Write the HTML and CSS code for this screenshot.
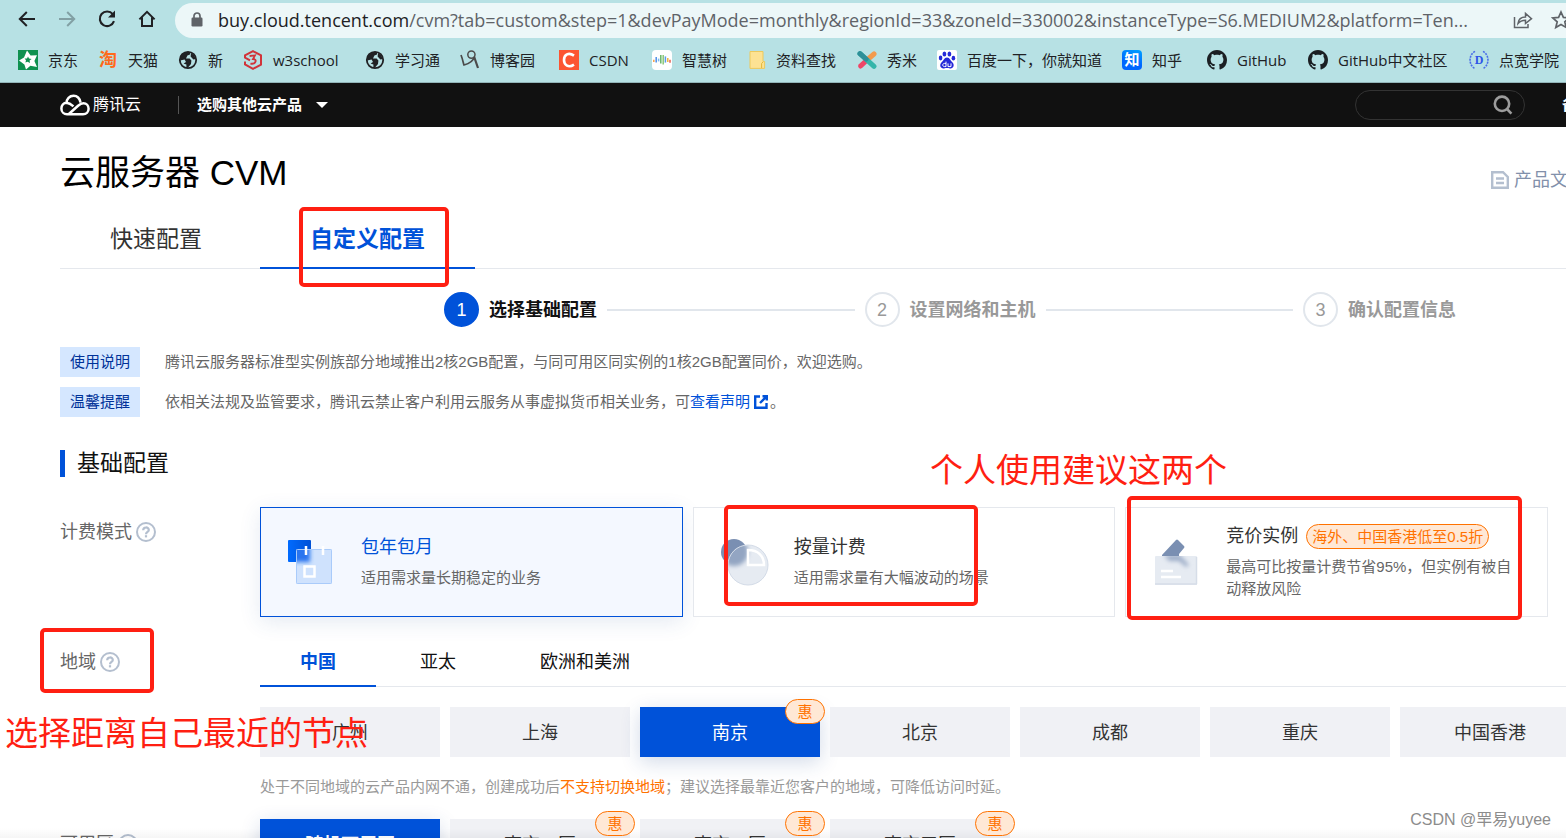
FILE: index.html
```
<!DOCTYPE html>
<html lang="zh-CN">
<head>
<meta charset="utf-8">
<title>云服务器 CVM</title>
<link rel="stylesheet" href="styles.css">
</head>
<body>
<svg class="defs" aria-hidden="true">
  <defs>
    <symbol id="globe" viewBox="0 0 20 20"><circle cx="10" cy="10" r="8.2" fill="none" stroke="#202124" stroke-width="1.8"/><path d="M3 5 L8 2 L12 2 L12 4.600 L9.400 5.600 L8 8.400 L11.600 8.400 L13.400 10.600 L13 14 L9.600 18 L8.400 17.600 L8.400 14.600 L5.600 13.400 L8 12 L6.600 9.600 L2 10.600 Z M13 3 L16 5 L18 9 L15.400 9.400 L12.600 6.400 Z" fill="#202124"/></symbol>
    <symbol id="octocat" viewBox="0 0 16 16"><path fill="#1b1f23" d="M8 0C3.58 0 0 3.58 0 8c0 3.54 2.29 6.53 5.47 7.59.4.07.55-.17.55-.38 0-.19-.01-.82-.01-1.49-2.01.37-2.53-.49-2.69-.94-.09-.23-.48-.94-.82-1.13-.28-.15-.68-.52-.01-.53.63-.01 1.08.58 1.23.82.72 1.21 1.87.87 2.33.66.07-.52.28-.87.51-1.07-1.78-.2-3.64-.89-3.64-3.95 0-.87.31-1.59.82-2.15-.08-.2-.36-1.02.08-2.12 0 0 .67-.21 2.2.82.64-.18 1.32-.27 2-.27s1.36.09 2 .27c1.53-1.04 2.2-.82 2.2-.82.44 1.1.16 1.92.08 2.12.51.56.82 1.27.82 2.15 0 3.07-1.87 3.75-3.65 3.95.29.25.54.73.54 1.48 0 1.07-.01 1.93-.01 2.2 0 .21.15.46.55.38A8.01 8.01 0 0 0 16 8c0-4.42-3.58-8-8-8z"/></symbol>
    <symbol id="help" viewBox="0 0 20 20"><circle cx="10" cy="10" r="9" fill="none" stroke="#b4bfcf" stroke-width="2"/><path d="M7.2 8.2 C7.2 4.6 12.8 4.6 12.8 8 C12.8 10 10 9.8 10 12.2" fill="none" stroke="#b4bfcf" stroke-width="2.2"/><rect x="8.900" y="13.200" width="2.200" height="2.200" fill="#b4bfcf"/></symbol>
  </defs>
</svg>

<header class="browser">
  <div class="toolbar">
    <button class="nav" type="button" aria-label="后退"><svg width="20" height="20" viewBox="0 0 20 20" fill="none" stroke="#202124" stroke-width="2"><path d="M18 10H3M9.8 3 L2.8 10 L9.8 17"/></svg></button>
    <button class="nav" type="button" aria-label="前进"><svg width="20" height="20" viewBox="0 0 20 20" fill="none" stroke="#82a0a4" stroke-width="2"><path d="M2 10H17M10.2 3 L17.2 10 L10.2 17"/></svg></button>
    <button class="nav" type="button" aria-label="刷新"><svg width="20" height="20" viewBox="0 0 20 20"><path d="M15.8 5.2 A7.3 7.3 0 1 0 17 12.2" fill="none" stroke="#202124" stroke-width="2.1"/><path d="M18 1.6V8.6H11Z" fill="#202124"/></svg></button>
    <button class="nav" type="button" aria-label="主页"><svg width="20" height="20" viewBox="0 0 20 20" fill="none" stroke="#202124" stroke-width="2"><path d="M2.4 10.4 L10 2.8 L17.6 10.4 M5 8.6V17H15V8.6"/></svg></button>
    <div class="address">
      <svg class="lock" width="12" height="16" viewBox="0 0 12 16"><rect x="0.5" y="5.5" width="11" height="9" rx="1.2" fill="#5f6368"/><path d="M3 6V4a3 3 0 0 1 6 0V6" fill="none" stroke="#5f6368" stroke-width="1.7"/></svg>
      <p class="url">buy.cloud.tencent.com<span class="path">/cvm?tab=custom&amp;step=1&amp;devPayMode=monthly&amp;regionId=33&amp;zoneId=330002&amp;instanceType=S6.MEDIUM2&amp;platform=Ten...</span></p>
      <button class="addr-btn" type="button" aria-label="分享"><svg width="20" height="20" viewBox="0 0 20 20" fill="none" stroke="#5f6368" stroke-width="1.5"><path d="M1.5 7V17.5H15V14M5 13.5C5.5 9 8.5 7 12.5 7V3.5L18.5 8.7L12.5 13.5V10.2C9 10.2 7 11 5 13.5Z"/></svg></button>
      <button class="addr-btn" type="button" aria-label="收藏"><svg width="20" height="20" viewBox="0 0 20 20" fill="none" stroke="#5f6368" stroke-width="1.7"><path d="M10 2 L12.4 7.4 L18.2 7.9 L13.8 11.8 L15.2 17.5 L10 14.4 L4.8 17.5 L6.2 11.8 L1.8 7.9 L7.6 7.4Z"/></svg></button>
    </div>
  </div>
  <nav class="bookmarks">
    <a href="#"><svg viewBox="0 0 20 20"><rect width="20" height="20" fill="#0f9150"/><path d="M9 .5 L12.6 5.4 L19 5.2 L16.4 11 L19 17 L12.4 15.8 L8 19.5 L6.4 14.4 L1 10.6 L6 7.4Z" fill="#fff"/><path d="M10 6.4 L11 8.6 L13.6 9 L11.6 10.6 L12 13 L9.6 11.8 L7.4 12.6 L8 10.2 L6.6 8.4 L9 8.4Z" fill="#0f9150"/></svg>京东</a>
    <a href="#"><span class="mark mark-tao">淘</span>天猫</a>
    <a href="#"><svg><use href="#globe"/></svg>新</a>
    <a href="#"><svg viewBox="0 0 20 20" fill="none" stroke="#d1343a" stroke-width="2"><path d="M2 8V5.4L10 1.2L18 5.4V14.6L10 18.8L2 14.4V11.4M1.6 7.4L7 10.4"/><path d="M6.6 6 L12 5.4 L10 9 C14.6 9 13 14.6 7.4 13.6" stroke-width="1.8"/></svg>w3school</a>
    <a href="#"><svg><use href="#globe"/></svg>学习通</a>
    <a href="#"><svg viewBox="0 0 20 20" fill="none" stroke="#4b4b4b"><circle cx="11.4" cy="4.6" r="3.6" stroke-width="1.5"/><path d="M1 5 C3 10 3.4 14 4 15 C8 14 13 12 14.4 6.6" stroke-width="1.7"/><path d="M14.2 7 L18 18" stroke-width="2.2"/></svg>博客园</a>
    <a href="#"><svg viewBox="0 0 20 20"><rect width="20" height="20" fill="#fc5531"/><path d="M15 5.6 C9.6 1.8 5 4.8 5 10 C5 15.2 9.6 18.2 15 14.6" fill="none" stroke="#fff" stroke-width="2.6"/></svg>CSDN</a>
    <a href="#"><svg viewBox="0 0 20 20"><rect width="20" height="20" rx="4" fill="#fff"/><g fill="none" stroke-width="1.5"><path d="M1.8 9.8V12" stroke="#f5a24b"/><path d="M4.2 7V12.6" stroke="#4f8ee8"/><path d="M6.6 8.6V11.4" stroke="#7cb8f0"/><path d="M8.8 5V13.4" stroke="#67b56a"/><path d="M11.2 5V14.6" stroke="#8cc873"/><path d="M13.4 6.4V12.6" stroke="#5b9be8"/><path d="M15.8 8V12" stroke="#f0b43c"/><path d="M18 9.8V12.8" stroke="#e45d50"/></g></svg>智慧树</a>
    <a href="#"><svg class="folder" viewBox="0 0 17 20"><path d="M1 1.5H14V11.5H15.6V18.4H1Z" fill="#fde293" stroke="#ecc95c"/><path d="M12.6 18V13.5L14 12" stroke="#e2b73c" fill="none"/></svg>资料查找</a>
    <a href="#"><svg viewBox="0 0 20 20" fill="none" stroke-linecap="round" stroke-width="5"><path d="M10 10L17 4" stroke="#f39a4c"/><path d="M10 10L3.6 16" stroke="#ee4667"/><path d="M3 3.6L17 16.4" stroke="#35b5aa"/><path d="M3 3.6L9 9" stroke="#2e8f98"/></svg>秀米</a>
    <a href="#"><svg viewBox="0 0 20 20"><rect width="20" height="20" rx="2" fill="#fff"/><g fill="#2529d8"><ellipse cx="7.4" cy="4" rx="1.9" ry="2.6"/><ellipse cx="12.4" cy="4" rx="1.9" ry="2.6"/><ellipse cx="3.6" cy="8" rx="1.8" ry="2.4"/><ellipse cx="16.4" cy="8.2" rx="1.8" ry="2.4"/><path d="M10 7.6C13 7.6 13.4 11 15.6 12.6C18 15.4 16 19 13 18.4C10.6 18 9.4 18 7 18.4C3.6 18.8 2 15.4 4.4 12.6C6.6 11 7 7.6 10 7.6Z"/></g><path d="M9 11.6V16.6H7.4C5.2 16.6 5.2 13.4 7.4 13.4H9M11 13.4V16.6H14V13.4" fill="none" stroke="#fff"/></svg>百度一下，你就知道</a>
    <a href="#"><span class="mark mark-zhi">知</span>知乎</a>
    <a href="#"><svg><use href="#octocat"/></svg>GitHub</a>
    <a href="#"><svg><use href="#octocat"/></svg>GitHub中文社区</a>
    <a href="#"><span class="mark mark-d"><svg viewBox="0 0 20 20" fill="none" stroke="#4b6fe8" stroke-width="1.6" stroke-dasharray="2 1"><path d="M6 1.4C-.6 5-.6 15 6 18.6M14 1.4C20.6 5 20.6 15 14 18.6"/></svg><b>D</b></span>点宽学院</a>
  </nav>
</header>

<div class="site">
  <header class="topbar">
    <a class="brand" href="#"><svg width="30" height="22" viewBox="0 0 30 22" fill="none" stroke="#fff" stroke-width="2.5"><path d="M20.5 8.4 C19.6 4 16.6 1.8 13.6 1.8 C9.4 1.8 6.6 5 6.6 8.8 C3.4 8.8 1.4 11.4 1.4 14.4 C1.4 18 4 20.3 7 20.3 H23 C26.4 20.3 28.6 17.8 28.6 14.8 C28.6 11.6 26.4 9.2 23.4 9.2 C20.8 9.2 19.6 10.4 17.8 12 L8.6 20.2 M6.4 9 C9.6 8.6 11 10.2 13.4 12.4"/></svg>腾讯云</a>
    <button class="products" type="button">选购其他云产品<svg width="12" height="6" viewBox="0 0 12 6"><path d="M0 0H12L6 6Z" fill="#fff"/></svg></button>
    <form class="search" role="search"><input type="search" aria-label="搜索"><svg width="20" height="20" viewBox="0 0 20 20" fill="none" stroke="#9c9c9c" stroke-width="2.6"><circle cx="9" cy="8.8" r="7.2"/><path d="M14 14L18.4 18.6"/></svg></form>
    <a class="record" href="#">备案</a>
  </header>

  <main class="page">
    <div class="title-row">
      <h1>云服务器 CVM</h1>
      <a class="docs" href="#"><svg width="18" height="18" viewBox="0 0 18 18" fill="none" stroke="#b4bfcf" stroke-width="2.4"><path d="M1.200 1.200H12L16.800 6V16.800H1.200ZM5 7.500H13M5 12H13"/></svg>产品文档</a>
    </div>
    <nav class="tabs">
      <a href="#">快速配置</a>
      <a class="on" href="#">自定义配置</a>
    </nav>
    <ol class="steps">
      <li class="on"><span class="num">1</span>选择基础配置</li>
      <li><span class="num">2</span>设置网络和主机</li>
      <li><span class="num">3</span>确认配置信息</li>
    </ol>
    <div class="notices">
      <p><span class="tag">使用说明</span>腾讯云服务器标准型实例族部分地域推出2核2GB配置，与同可用区同实例的1核2GB配置同价，欢迎选购。</p>
      <p><span class="tag">温馨提醒</span>依相关法规及监管要求，腾讯云禁止客户利用云服务从事虚拟货币相关业务，可<a href="#">查看声明<svg width="14" height="14" viewBox="0 0 14 14" fill="none" stroke="#0052d9" stroke-width="2.4"><path d="M6 1.5H1.200V12.800H12.500V8M8.500 1.200H12.800V5.500M13 1L6 8"/></svg></a>。</p>
    </div>
    <h2>基础配置</h2>

    <section class="row billing">
      <h3>计费模式<svg width="20" height="20"><use href="#help"/></svg></h3>
      <div class="cards">
        <button class="card on" type="button">
          <svg class="art" width="50" height="50" viewBox="0 0 50 50">
            <defs><linearGradient id="blue"><stop stop-color="#006bff"/><stop offset="1" stop-color="#0051d6"/></linearGradient><filter id="soft" x="-50%" y="-50%" width="200%" height="200%"><feGaussianBlur stdDeviation="2"/></filter><clipPath id="sheet"><rect x="10" y="12" width="36" height="35" rx="1"/></clipPath></defs>
            <rect x="2" y="3" width="23" height="22" rx="1" fill="url(#blue)"/>
            <rect x="10" y="12" width="36" height="35" rx="1" fill="#cfe2fd"/>
            <g clip-path="url(#sheet)"><rect x="0" y="1" width="24" height="24" fill="#2b74ef" filter="url(#soft)"/></g>
            <rect x="10.500" y="12.500" width="35" height="34" rx="1" fill="none" stroke="#a9cbfa"/>
            <path d="M20 9V18M37 9V18" stroke="#fff" stroke-width="2.500"/>
            <rect x="18.500" y="29.500" width="10" height="10" fill="none" stroke="#fff" stroke-width="2.500"/>
          </svg>
          <span class="info"><strong>包年包月</strong><span>适用需求量长期稳定的业务</span></span>
        </button>
        <button class="card" type="button">
          <svg class="art" width="50" height="50" viewBox="0 0 50 50">
            <defs><clipPath id="disc"><circle cx="29" cy="28" r="20"/></clipPath></defs>
            <circle cx="15" cy="15" r="13" fill="#7a8fb2"/>
            <circle cx="29" cy="28" r="20" fill="#e6ebf2"/>
            <g clip-path="url(#disc)"><circle cx="15" cy="15" r="14" fill="#93a5c2" filter="url(#soft)"/></g>
            <circle cx="29" cy="28" r="20" fill="none" stroke="#d3dbe7"/>
            <path d="M29 13V28H45C45 19 39 13 29 13Z" fill="none" stroke="#fff" stroke-width="2.500"/>
          </svg>
          <span class="info"><strong>按量计费</strong><span>适用需求量有大幅波动的场景</span></span>
        </button>
        <button class="card" type="button">
          <svg class="art" width="50" height="50" viewBox="0 0 50 50">
            <defs><clipPath id="paper"><rect x="4" y="19" width="42" height="29"/></clipPath></defs>
            <path d="M11 18L25 3Q26 2 27 3L33 9Q34 10 33 11L28 17V20H11Z" fill="#7a8fb2"/>
            <rect x="4" y="19" width="42" height="29" rx="1" fill="#e6ebf2"/>
            <g clip-path="url(#paper)"><path d="M13 18L29 18L38 28L35 30L28 24L18 24Z" fill="#9dadc8" filter="url(#soft)"/></g>
            <path d="M4 47H46M45.500 20V47" stroke="#d6dde8" stroke-width="1.500"/>
            <path d="M10 34H22M10 40H30" stroke="#fff" stroke-width="2.500"/>
          </svg>
          <span class="info"><strong>竞价实例<em class="promo">海外、中国香港低至0.5折</em></strong><span>最高可比按量计费节省95%，但实例有被自动释放风险</span></span>
        </button>
      </div>
    </section>

    <section class="row region">
      <h3>地域<svg width="20" height="20"><use href="#help"/></svg></h3>
      <div class="field">
        <nav class="subtabs"><a class="on" href="#">中国</a><a href="#">亚太</a><a href="#">欧洲和美洲</a></nav>
        <div class="options">
          <button type="button">广州</button>
          <button type="button">上海</button>
          <button class="on" type="button">南京<i class="badge">惠</i></button>
          <button type="button">北京</button>
          <button type="button">成都</button>
          <button type="button">重庆</button>
          <button type="button">中国香港</button>
        </div>
        <p class="hint">处于不同地域的云产品内网不通，创建成功后<b>不支持切换地域</b>；建议选择最靠近您客户的地域，可降低访问时延。</p>
      </div>
    </section>

    <section class="row zone">
      <h3>可用区<svg width="20" height="20"><use href="#help"/></svg></h3>
      <div class="options">
        <button class="on strong" type="button">随机可用区</button>
        <button type="button">南京一区<i class="badge">惠</i></button>
        <button type="button">南京二区<i class="badge">惠</i></button>
        <button type="button">南京三区<i class="badge">惠</i></button>
      </div>
    </section>
  </main>
</div>

<div class="frame frame-tab"></div>
<div class="frame frame-payg"></div>
<div class="frame frame-spot"></div>
<div class="frame frame-region"></div>
<p class="note note-billing">个人使用建议这两个</p>
<p class="note note-region">选择距离自己最近的节点</p>
<p class="credit">CSDN @䍐易yuyee</p>
</body>
</html>
```
FILE: styles.css
```
* { box-sizing: border-box; }
html { height: 100%; overflow: hidden; }
body {
  position: relative;
  height: 100%;
  margin: 0;
  overflow: hidden;
  background: #fff;
  color: #333;
  font: 18px/24px "Liberation Sans", "Noto Sans CJK SC", sans-serif;
}
body::after {
  content: "";
  position: absolute;
  inset: auto 0 0;
  height: 10px;
  background: linear-gradient(rgba(0, 0, 0, 0), rgba(0, 0, 0, 0.04));
}
h1, h2, h3, p, ol { margin: 0; padding: 0; font-weight: 400; }
a { color: inherit; text-decoration: none; }
button { border: 0; padding: 0; background: none; color: inherit; font: inherit; cursor: pointer; }
svg { flex: none; }
.defs { position: absolute; width: 0; height: 0; }

/* Browser bars */
.browser {
  overflow: hidden;
  background: #b7e1e4;
  border-bottom: 1px solid #93b5b9;
  color: #202124;
  font-family: "Open Sans", "Noto Sans CJK SC", sans-serif;
}
.toolbar { display: flex; align-items: center; gap: 20px; height: 38px; padding-left: 17px; }
.nav { display: flex; width: 20px; }
.address {
  flex: 1;
  display: flex;
  align-items: center;
  min-width: 0;
  height: 35px;
  margin: 2px -32px 0 -2px;
  padding: 0 9px 0 16px;
  border-radius: 18px 0 0 18px;
  background: #ecf7f8;
}
.url { flex: 1; min-width: 0; margin-left: 15px; font-size: 18px; white-space: nowrap; }
.path { color: #5f6368; }
.addr-btn { display: flex; margin-right: 18px; }
.bookmarks {
  display: grid;
  grid-template-columns: 80px 80px 65px 122px 95px 99px 93px 97px 108px 80px 185px 85px 101px 161px 110px;
  height: 44px;
  padding-left: 18px;
  font-size: 15px;
}
.bookmarks a { display: flex; align-items: center; gap: 10px; white-space: nowrap; }
.bookmarks svg { width: 20px; height: 20px; }
.bookmarks .folder { width: 17px; }
.mark {
  position: relative;
  display: flex;
  align-items: center;
  justify-content: center;
  flex: none;
  width: 20px;
  height: 20px;
  font-weight: 700;
  line-height: 18px;
}
.mark-tao { padding-bottom: 2px; color: #ff6a1a; font-size: 18px; }
.mark-zhi { padding-bottom: 2px; border-radius: 4px; background: linear-gradient(200deg, #00a2ff, #0066ff 60%); color: #fff; font-size: 15px; }
.mark-d { color: #2c55e8; font: 700 12px "Liberation Serif", serif; }
.mark-d svg { position: absolute; inset: 0; }

/* Site header */
.topbar { display: flex; align-items: center; height: 44px; padding-left: 60px; background: #111; color: #fff; font-size: 15px; white-space: nowrap; }
.brand { display: flex; align-items: center; gap: 3px; font-size: 16px; }
.products { display: flex; align-items: center; gap: 14px; margin-left: 37px; padding-left: 18px; border-left: 1px solid #555; line-height: 18px; font-weight: 700; }
.search { display: flex; align-items: center; width: 170px; height: 30px; margin-left: auto; padding: 0 11px; border: 1px solid #333; border-radius: 15px; }
.search input { flex: 1; min-width: 0; border: 0; outline: 0; background: none; color: #fff; font: inherit; }
.record { margin: 0 -26px 0 37px; font-weight: 700; }

/* Page */
.page { padding-left: 60px; }
.title-row { display: flex; align-items: flex-end; justify-content: space-between; padding-top: 20px; }
h1 { color: #000; font-size: 35px; line-height: 52px; }
.docs { display: flex; align-items: center; gap: 5px; margin: 0 -20px 7px 0; color: #8290aa; white-space: nowrap; }
.tabs { display: flex; gap: 8px; height: 70px; border-bottom: 1px solid #e5e8ed; font-size: 23px; }
.tabs a { height: 70px; padding: 0 50px; line-height: 80px; }
.tabs .on { border-bottom: 2px solid #0052d9; color: #0052d9; font-weight: 700; }

.steps { display: flex; list-style: none; padding: 23px 0 20px 384px; margin-right: 110px; }
.steps li { display: flex; align-items: center; gap: 10px; color: #999; font-weight: 700; white-space: nowrap; }
.steps li:not(:last-child) { flex: 1 1 auto; }
.steps li:not(:last-child)::after { content: ""; flex: 1; height: 2px; margin-right: 10px; background: #e1e6ec; }
.num { display: grid; place-items: center; width: 35px; height: 35px; border: 2px solid #e1e6ec; border-radius: 50%; font-weight: 400; }
.steps .on { color: #111; }
.on .num { border-color: #0052d9; background: #0052d9; color: #fff; }

.notices { display: grid; gap: 10px; color: #666; font-size: 15px; }
.notices p { display: flex; align-items: center; white-space: nowrap; }
.notices a { display: flex; align-items: center; gap: 4px; margin-right: 2px; color: #0052d9; }
.tag { width: 80px; margin-right: 25px; background: #d5e7ff; color: #003299; line-height: 30px; text-align: center; }

h2 { display: flex; align-items: center; gap: 12px; margin-top: 33px; color: #111; font-size: 23px; line-height: 27px; }
h2::before { content: ""; width: 5px; height: 27px; background: #0052d9; }

.row { display: grid; grid-template-columns: 200px 1fr; }
.row h3 { display: flex; align-items: center; align-self: start; gap: 4px; color: #666; font-size: 18px; }
.billing { margin: 30px 18px 0 0; }
.billing h3 { margin-top: 13px; }
.cards { display: grid; grid-template-columns: repeat(3, 1fr); gap: 10px; }
.card { display: flex; align-items: center; gap: 25px; min-height: 110px; padding: 0 30px 0 25px; border: 1px solid #e5e8ed; background: #fff; text-align: left; }
.card.on { border-color: #0052d9; background: #f4f8ff; box-shadow: 0 5px 20px rgba(40, 80, 150, 0.12); }
.info { display: grid; gap: 7px; color: #666; font-size: 15px; line-height: 22px; }
.info strong { display: flex; align-items: center; gap: 8px; color: #333; font-size: 18px; font-weight: 400; line-height: 25px; white-space: nowrap; }
.card.on strong { color: #0052d9; }
.promo { padding: 0 5px; border: 1px solid #ff7200; border-radius: 13px; background: #ffe8d5; color: #ff7200; font-size: 15px; font-style: normal; line-height: 23px; }

.region { margin-top: 20px; }
.region h3 { margin-top: 13px; }
.field { min-width: 0; }
.subtabs { display: flex; gap: 4px; height: 50px; border-bottom: 1px solid #e5e8ed; color: #111; }
.subtabs a { height: 50px; padding: 0 40px; line-height: 50px; white-space: nowrap; }
.subtabs .on { border-bottom: 2px solid #0052d9; color: #0052d9; font-weight: 700; }
.options { display: flex; gap: 10px; }
.field .options { margin-top: 20px; }
.options button { position: relative; flex: none; width: 180px; height: 50px; padding-top: 2px; background: #f0f1f5; }
.options .on { background: #0052d9; color: #fff; box-shadow: 0 5px 20px rgba(30, 70, 140, 0.2); }
.options .strong { font-weight: 700; }
.badge { position: absolute; z-index: 1; top: -8px; right: -5px; width: 40px; height: 25px; border: 1px solid #ff7200; border-radius: 13px; background: #ffe8d5; color: #ff7200; font-size: 15px; font-style: normal; line-height: 23px; }
.hint { margin-top: 18px; color: #999; font-size: 15px; white-space: nowrap; }
.hint b { color: #ff7200; font-weight: 400; }
.zone { margin-top: 20px; }
.zone h3 { margin-top: 13px; }

/* Annotations drawn over the page */
.frame { position: absolute; z-index: 2; border: 4px solid #ff1f12; border-radius: 5px; pointer-events: none; }
.frame-tab { left: 299px; top: 207px; width: 150px; height: 80px; }
.frame-payg { left: 724px; top: 505px; width: 254px; height: 101px; }
.frame-spot { left: 1127px; top: 496px; width: 395px; height: 124px; }
.frame-region { left: 40px; top: 628px; width: 114px; height: 65px; }
.note { position: absolute; z-index: 2; color: #ff1f12; font-size: 33px; line-height: 40px; white-space: nowrap; }
.note-billing { left: 930px; top: 451px; }
.note-region { left: 5px; top: 714px; }
.credit { position: absolute; z-index: 2; right: 15px; bottom: 6px; color: #8c8c8c; font-size: 16px; white-space: nowrap; }
```
